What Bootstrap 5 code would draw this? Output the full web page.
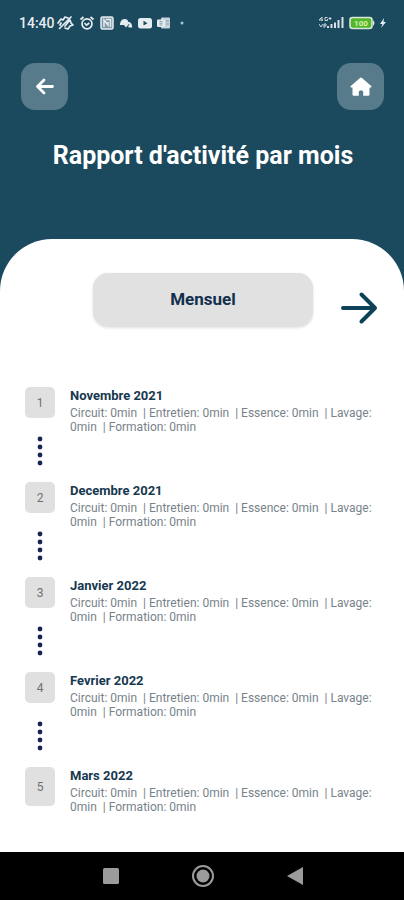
<!DOCTYPE html>
<html lang="fr">
<head>
<meta charset="utf-8">
<meta name="viewport" content="width=device-width, initial-scale=1">
<title>Rapport d'activité par mois</title>
<link href="https://cdn.jsdelivr.net/npm/bootstrap@5.3.0/dist/css/bootstrap.min.css" rel="stylesheet">
<style>
  body { background: #1b495e; font-family: Roboto, "Liberation Sans", sans-serif; }
  .status { height: 46px; padding: 0 17px 0 19px; color: #e6edf1; }
  .clock { font-size: 14px; font-weight: 500; line-height: 16px; margin-right: -3px; }
  .status-icons { gap: 5px; }
  .topbar { padding: 17px 20px 0 21px; }
  .tile { width: 47px; height: 47px; border-radius: 14px; background: #577b8b; color: #fff; }
  .screen-title { font-size: 25px; line-height: 30px; font-weight: 700; margin: 31px 0 68px; padding-left: 2px; }
  .sheet { border-radius: 52px 52px 0 0; padding-top: 34px; }
  .period-row { padding-right: 26px; gap: 27px; }
  .period { width: 220px; height: 54px; border-radius: 15px; background: #e1e1e1; color: #12304d; font-size: 17px; font-weight: 700; box-shadow: 0 1px 3px rgba(0, 0, 0, .12); }
  .next { margin-top: 14px; color: #0f4159; }
  .months { margin: 60px 0 0; padding: 0 24px 0 25px; }
  .month { min-height: 95px; gap: 15px; }
  .month:last-child { min-height: 39px; }
  .rail { width: 30px; }
  .num { width: 30px; height: 31px; border-radius: 5px; background: #e0e0e0; color: #707070; font-size: 12px; }
  .month:last-child .num { height: 39px; }
  .dots { margin-top: 18px; }
  .month-name { font-size: 13px; line-height: 16px; font-weight: 700; color: #17384f; margin: 1px 0 2px; }
  .month-detail { font-size: 12px; line-height: 14px; color: #77838a; margin: 0; }
  .sysnav { height: 48px; background: #000; color: #9b9b9b; gap: 72px; padding-left: 1px; }
</style>
<script src="https://cdn.jsdelivr.net/npm/bootstrap@5.3.0/dist/js/bootstrap.bundle.min.js"></script>
</head>
<body class="min-vh-100 d-flex flex-column">
<header>
  <div class="status d-flex align-items-center justify-content-between">
    <div class="status-icons d-flex align-items-center">
      <span class="clock">14:40</span>
      <svg width="17" height="16" viewBox="0 0 17 16" fill="none" stroke="currentColor" stroke-width="1.700" stroke-linecap="round" stroke-linejoin="round" aria-hidden="true"><path d="M2.500 13.500 14 2M1 8l3-4 2 1 2-3 3 1M13 5l1 3 2 2-3 1-2 3-3-1M4 8l-1 2M8 11l4-5"/></svg>
      <svg width="16" height="16" viewBox="0 0 16 16" fill="none" stroke="currentColor" stroke-width="1.700" aria-hidden="true"><circle cx="8" cy="8.800" r="5"/><path d="M1.500 4.500 4.500 2M14.500 4.500l-3-2.500M5.500 8l2 2.200L10.300 8"/></svg>
      <svg width="14" height="16" viewBox="0 0 14 16" fill="none" stroke="currentColor" stroke-width="1.500" aria-hidden="true"><rect x="1" y="2" width="12" height="12" rx="1.500" fill="#7d98a6"/><path d="M4 12V5l4 5V7M6 4.500h4.500V12"/></svg>
      <svg width="14" height="16" viewBox="0 0 14 16" fill="currentColor" aria-hidden="true"><path d="M1 10c0-3 1.500-6 4.500-6C8 4 9 5 9.300 7c2.500 0 4 2 3.900 5.500H10l-1.500-2-1.500 2L5 10z"/><circle cx="9.500" cy="10" r=".8" fill="#1b495e"/></svg>
      <svg width="14" height="16" viewBox="0 0 14 16" aria-hidden="true"><rect y="3" width="14" height="10.500" rx="2.500" fill="currentColor"/><path d="m5.500 5.800 4 2.400-4 2.400z" fill="#1b495e"/></svg>
      <svg width="14" height="16" viewBox="0 0 14 16" aria-hidden="true"><rect x="4" y="2.500" width="9" height="11" rx="1" fill="#c6d3da"/><rect y="4.500" width="8" height="7.500" rx="1" fill="currentColor"/><path d="M2.500 6.500h3M2.500 8.300h3M2.500 10h3M9 6h3M9 9h3" stroke="#6f8d9b" stroke-width=".8"/></svg>
      <svg width="14" height="16" viewBox="0 0 14 16" fill="#a7c4d3" aria-hidden="true"><circle cx="6" cy="8" r="1.500"/></svg>
    </div>
    <div class="d-flex align-items-center gap-1">
      <svg width="26" height="16" viewBox="1 0 26 16" aria-hidden="true"><g fill="none" stroke="#cbd7dd" stroke-width="1"><path d="M4 6V2L1 5h4M9.500 2.500H7v3h2.500V4M12 2v3M10.500 3.500h3M1 9l2 3 2-3M6 13V9h2v2H6"/></g><path d="M9 13v-2h2v2zM12.500 13V9h2v4zM16 13V7.500h2V13zM19.500 13V5h2v8zM23.500 13V2h2v11z" fill="#d9e2e6"/></svg>
      <svg width="26" height="16" viewBox="0 0 26 16" aria-hidden="true"><rect x="1" y="2.500" width="22" height="11" rx="2.500" fill="#54b72b" stroke="#d9e6dc" stroke-width="1.600"/><path d="M24 5q3 3 0 6z" fill="#d9e6dc"/><text x="12" y="11" text-anchor="middle" font-size="8" font-weight="700" fill="#d6f4b0">100</text></svg>
      <svg width="8" height="16" viewBox="0 0 8 16" fill="currentColor" aria-hidden="true"><path d="M5 3 1 9h2.500L2 13l5-6H4.500z"/></svg>
    </div>
  </div>
  <nav class="topbar d-flex justify-content-between" aria-label="Navigation">
    <button type="button" class="tile btn border-0 p-0 d-flex align-items-center justify-content-center" aria-label="Retour">
      <svg width="20" height="18" viewBox="0 0 20 18" fill="none" stroke="currentColor" stroke-width="2.800" stroke-linecap="round" stroke-linejoin="round" aria-hidden="true"><path d="M17.500 8.500H3M9 2 2.500 8.500 9 15"/></svg>
    </button>
    <button type="button" class="tile btn border-0 p-0 d-flex align-items-center justify-content-center" aria-label="Accueil">
      <svg width="22" height="20" viewBox="0 0 22 20" fill="currentColor" aria-hidden="true"><path d="M10 .9a1.500 1.500 0 0 1 2 0l9.200 8.100c.7.700.4 1.500-.5 1.500H19.500v7a1.300 1.300 0 0 1-1.300 1.300H13.200V15a1.500 1.500 0 0 0-1.500-1.500h-1.400A1.500 1.500 0 0 0 8.800 15v3.800H3.800A1.300 1.300 0 0 1 2.500 17.500v-7H1.300C.4 10.500.1 9.700.8 9z"/></svg>
    </button>
  </nav>
  <h1 class="screen-title text-center text-white">Rapport d'activité par mois</h1>
</header>
<main class="sheet bg-white flex-grow-1">
  <div class="period-row d-flex justify-content-end">
    <button type="button" class="period btn border-0">Mensuel</button>
    <button type="button" class="next btn border-0 p-0" aria-label="Mois suivants">
      <svg class="d-block" width="38" height="40" viewBox="0 0 38 40" fill="none" stroke="currentColor" stroke-width="4" stroke-linecap="round" stroke-linejoin="round" aria-hidden="true"><path d="M3 21h31M21.500 7.500 35 21 21.500 34.500"/></svg>
    </button>
  </div>
  <ol class="months list-unstyled">
    <li class="month d-flex">
      <div class="rail flex-shrink-0"><div class="num d-flex align-items-center justify-content-center">1</div><svg class="dots d-block mx-auto" width="6" height="32" viewBox="0 0 6 32" fill="#16264f" aria-hidden="true"><circle cx="3" cy="3" r="2.400"/><circle cx="3" cy="11" r="2.400"/><circle cx="3" cy="19" r="2.400"/><circle cx="3" cy="27" r="2.400"/></svg></div>
      <div><h2 class="month-name">Novembre 2021</h2><p class="month-detail">Circuit: 0min&nbsp; | Entretien: 0min&nbsp; | Essence: 0min&nbsp; | Lavage: 0min&nbsp; | Formation: 0min</p></div>
    </li>
    <li class="month d-flex">
      <div class="rail flex-shrink-0"><div class="num d-flex align-items-center justify-content-center">2</div><svg class="dots d-block mx-auto" width="6" height="32" viewBox="0 0 6 32" fill="#16264f" aria-hidden="true"><circle cx="3" cy="3" r="2.400"/><circle cx="3" cy="11" r="2.400"/><circle cx="3" cy="19" r="2.400"/><circle cx="3" cy="27" r="2.400"/></svg></div>
      <div><h2 class="month-name">Decembre 2021</h2><p class="month-detail">Circuit: 0min&nbsp; | Entretien: 0min&nbsp; | Essence: 0min&nbsp; | Lavage: 0min&nbsp; | Formation: 0min</p></div>
    </li>
    <li class="month d-flex">
      <div class="rail flex-shrink-0"><div class="num d-flex align-items-center justify-content-center">3</div><svg class="dots d-block mx-auto" width="6" height="32" viewBox="0 0 6 32" fill="#16264f" aria-hidden="true"><circle cx="3" cy="3" r="2.400"/><circle cx="3" cy="11" r="2.400"/><circle cx="3" cy="19" r="2.400"/><circle cx="3" cy="27" r="2.400"/></svg></div>
      <div><h2 class="month-name">Janvier 2022</h2><p class="month-detail">Circuit: 0min&nbsp; | Entretien: 0min&nbsp; | Essence: 0min&nbsp; | Lavage: 0min&nbsp; | Formation: 0min</p></div>
    </li>
    <li class="month d-flex">
      <div class="rail flex-shrink-0"><div class="num d-flex align-items-center justify-content-center">4</div><svg class="dots d-block mx-auto" width="6" height="32" viewBox="0 0 6 32" fill="#16264f" aria-hidden="true"><circle cx="3" cy="3" r="2.400"/><circle cx="3" cy="11" r="2.400"/><circle cx="3" cy="19" r="2.400"/><circle cx="3" cy="27" r="2.400"/></svg></div>
      <div><h2 class="month-name">Fevrier 2022</h2><p class="month-detail">Circuit: 0min&nbsp; | Entretien: 0min&nbsp; | Essence: 0min&nbsp; | Lavage: 0min&nbsp; | Formation: 0min</p></div>
    </li>
    <li class="month d-flex">
      <div class="rail flex-shrink-0"><div class="num d-flex align-items-center justify-content-center">5</div></div>
      <div><h2 class="month-name">Mars 2022</h2><p class="month-detail">Circuit: 0min&nbsp; | Entretien: 0min&nbsp; | Essence: 0min&nbsp; | Lavage: 0min&nbsp; | Formation: 0min</p></div>
    </li>
  </ol>
</main>
<footer class="sysnav d-flex align-items-center justify-content-center">
  <button type="button" class="btn border-0 p-0 text-reset" aria-label="Applications récentes"><svg class="d-block" width="17" height="24" viewBox="0 0 17 24" fill="currentColor" aria-hidden="true"><rect x="1" y="4" width="16" height="16" rx="1.500"/></svg></button>
  <button type="button" class="btn border-0 p-0 text-reset" aria-label="Écran d'accueil"><svg class="d-block" width="24" height="24" viewBox="0 0 24 24" aria-hidden="true"><circle cx="12" cy="12" r="10" fill="none" stroke="currentColor" stroke-width="2"/><circle cx="12" cy="12" r="6.500" fill="currentColor"/></svg></button>
  <button type="button" class="btn border-0 p-0 text-reset" aria-label="Retour système"><svg class="d-block" width="17" height="24" viewBox="0 0 17 24" fill="currentColor" aria-hidden="true"><path d="M16 3v18L0 12z"/></svg></button>
</footer>
</body>
</html>
